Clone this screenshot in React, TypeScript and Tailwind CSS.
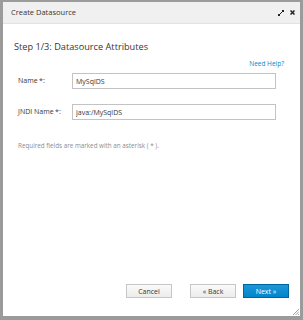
export default function App() {
    return (
        <div className="relative w-[303px] h-[320px] bg-[#9b9b9b] pt-[2px] px-[3px] pb-[4px] font-['Open_Sans',sans-serif]">
            <div className="flex flex-col w-full h-full bg-white">
                <div className="flex items-center justify-between h-[22px] pl-[8px] pr-[5px] bg-[#f0f0f0] border-b border-[#e2e2e2]">
                    <span className="text-[7.5px] text-[#363636]">Create Datasource</span>
                    <div className="flex items-center gap-[6px]">
                        <svg width="6" height="6" viewBox="0 0 6 6">
                            <path d="M0.5 5.5 L5.5 0.5" stroke="#222" strokeWidth="1" />
                            <rect x="0" y="4" width="2" height="2" fill="#222" />
                            <rect x="4" y="0" width="2" height="2" fill="#222" />
                        </svg>
                        <svg width="5" height="5" viewBox="0 0 5 5">
                            <path d="M0.5 0.5 L4.5 4.5 M4.5 0.5 L0.5 4.5" stroke="#222" strokeWidth="1.5" />
                        </svg>
                    </div>
                </div>
                <div className="flex flex-col flex-1 px-[11px]">
                    <div className="mt-[16px] text-[9.2px] text-[#363636] leading-[14px]">Step 1/3: Datasource Attributes</div>
                    <div className="flex justify-end mt-[5px] pr-[5px]">
                        <span className="text-[6.5px] text-[#0088ce] leading-[10px]">Need Help?</span>
                    </div>
                    <div className="flex items-center mt-[4px]">
                        <label className="w-[58px] pl-[4px] text-[7px] text-[#363636]">
                            Name<span className="ml-[1.5px]">*:</span>
                        </label>
                        <input
                            defaultValue="MySqlDS"
                            className="w-[204px] h-[16px] px-[3px] text-[7px] text-[#363636] border border-[#c3c3c3] outline-none"
                        />
                    </div>
                    <div className="flex items-center mt-[15px]">
                        <label className="w-[58px] pl-[4px] text-[7px] text-[#363636]">
                            JNDI Name<span className="ml-[1.5px]">*:</span>
                        </label>
                        <input
                            defaultValue="java:/MySqlDS"
                            className="w-[204px] h-[16px] px-[3px] text-[7px] text-[#363636] border border-[#c3c3c3] outline-none"
                        />
                    </div>
                    <div className="mt-[21px] pl-[4px] text-[6.3px] text-[#8b8d8f]">
                        Required fields are marked with an asterisk ( * ).
                    </div>
                    <div className="flex justify-end items-center mt-auto mb-[18px]">
                        <button className="w-[46px] h-[14px] text-[7px] text-[#363636] border border-[#c6c6c6] bg-gradient-to-b from-[#fafafa] to-[#ececec] leading-none">
                            Cancel
                        </button>
                        <button className="ml-[18px] w-[46px] h-[14px] text-[7px] text-[#363636] border border-[#c6c6c6] bg-gradient-to-b from-[#fafafa] to-[#ececec] leading-none">
                            « Back
                        </button>
                        <button className="ml-[7px] w-[46px] h-[14px] text-[7px] text-white border border-[#00659c] bg-gradient-to-b from-[#1b95d8] to-[#0086cd] leading-none">
                            Next »
                        </button>
                    </div>
                </div>
            </div>
            <svg className="absolute right-[4px] bottom-[5px]" width="7" height="7" viewBox="0 0 7 7">
                <path d="M1 7 L7 1 M3.5 7 L7 3.5 M6 7 L7 6" stroke="#8a8a8a" strokeWidth="0.8" />
            </svg>
        </div>
    );
}
